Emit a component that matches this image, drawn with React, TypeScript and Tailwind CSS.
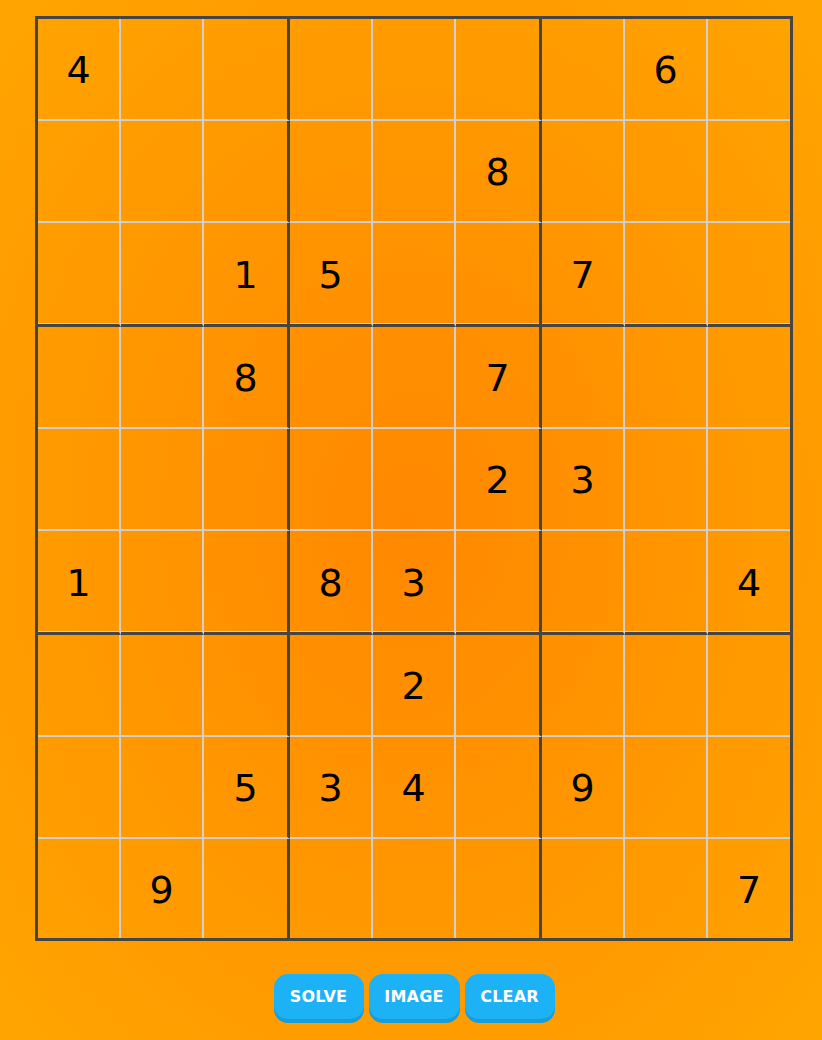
const puzzle: (number | null)[][] = [
  [4, null, null, null, null, null, null, 6, null],
  [null, null, null, null, null, 8, null, null, null],
  [null, null, 1, 5, null, null, 7, null, null],
  [null, null, 8, null, null, 7, null, null, null],
  [null, null, null, null, null, 2, 3, null, null],
  [1, null, null, 8, 3, null, null, null, 4],
  [null, null, null, null, 2, null, null, null, null],
  [null, null, 5, 3, 4, null, 9, null, null],
  [null, 9, null, null, null, null, null, null, 7],
]

function cellClass(r: number, c: number) {
  const right = c === 8 ? '' : c === 2 || c === 5 ? 'border-r-[3px] border-r-[#454545]' : 'border-r-2 border-r-[#d0d0d0]'
  const bottom =
    r === 8
      ? ''
      : r === 2 || r === 5
        ? 'border-b-[3px] border-b-[#454545] shadow-[inset_0_-1px_0_#d0d0d0]'
        : 'border-b-2 border-b-[#d0d0d0]'
  return `${right} ${bottom} flex items-center justify-center pt-[2px]`
}

const buttons = [
  { label: 'SOLVE', w: 'w-[90px]' },
  { label: 'IMAGE', w: 'w-[91px]' },
  { label: 'CLEAR', w: 'w-[90px]' },
]

export default function App() {
  return (
    <div className="min-h-screen w-full bg-[radial-gradient(ellipse_at_center,#ff8800_0%,#ffa500_100%)] pt-4 font-['DejaVu_Sans',sans-serif]">
      <div className="ml-[35px] w-[758px]">
        <div className="grid h-[925px] grid-cols-[83px_83px_86px_83px_83px_86px_83px_83px_82px] grid-rows-[102px_102px_104px_102px_102px_104px_102px_102px_99px] border-[3px] border-[#454545]">
          {puzzle.map((row, r) =>
            row.map((v, c) => (
              <div key={`${r}-${c}`} className={cellClass(r, c)}>
                <span className="text-[38px] leading-none text-black">{v ?? ''}</span>
              </div>
            ))
          )}
        </div>
        <div className="mt-[33px] flex justify-center gap-[5px]">
          {buttons.map((b) => (
            <button
              key={b.label}
              className={`h-[45px] ${b.w} rounded-[14px] bg-[#1db2f6] text-[16px] font-bold tracking-[0.2px] text-white shadow-[0_4px_0_#1a9cd9]`}
            >
              {b.label}
            </button>
          ))}
        </div>
      </div>
    </div>
  )
}
